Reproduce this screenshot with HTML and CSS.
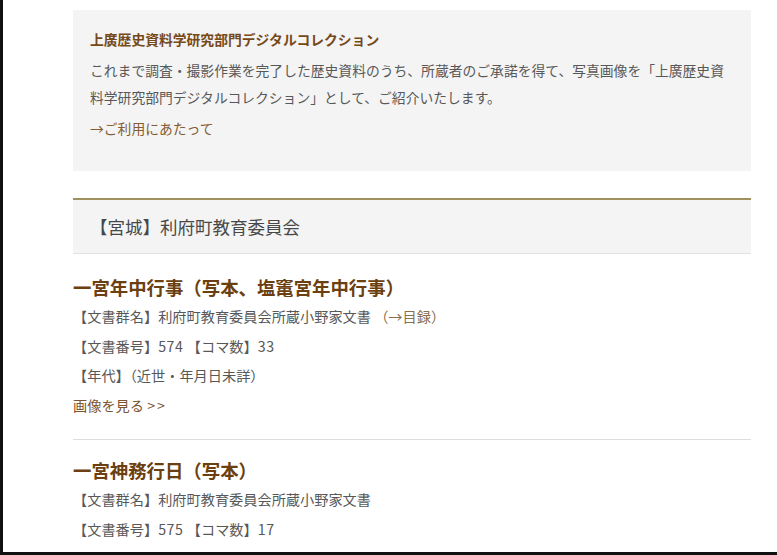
FILE: index.html
```html
<!DOCTYPE html>
<html lang="ja">
<head>
    <meta charset="UTF-8">
    <meta name="viewport" content="width=device-width, initial-scale=1.0">
    <title>上廣歴史資料学研究部門デジタルコレクション</title>
    <link rel="stylesheet" href="styles.css">
</head>
<body>
    <div class="frame"></div>

    <main class="content">
        <section class="intro">
            <h1 class="intro-title">上廣歴史資料学研究部門デジタルコレクション</h1>
            <p class="intro-text">これまで調査・撮影作業を完了した歴史資料のうち、所蔵者のご承諾を得て、写真画像を「上廣歴史資料学研究部門デジタルコレクション」として、ご紹介いたします。</p>
            <a class="intro-link" href="#">→ご利用にあたって</a>
        </section>

        <section class="owner">
            <h2 class="owner-name">【宮城】利府町教育委員会</h2>

            <article class="doc">
                <h3 class="doc-title">一宮年中行事（写本、塩竃宮年中行事）</h3>
                <p class="doc-line">【文書群名】利府町教育委員会所蔵小野家文書 <a class="catalog" href="#">（→目録）</a></p>
                <p class="doc-line">【文書番号】<span class="num">574</span> 【コマ数】<span class="num">33</span></p>
                <p class="doc-line">【年代】（近世・年月日未詳）</p>
                <p class="doc-line"><a class="view-link" href="#">画像を見る <span class="arrows">&gt;&gt;</span></a></p>
            </article>

            <article class="doc">
                <h3 class="doc-title">一宮神務行日（写本）</h3>
                <p class="doc-line">【文書群名】利府町教育委員会所蔵小野家文書</p>
                <p class="doc-line">【文書番号】<span class="num">575</span> 【コマ数】<span class="num">17</span></p>
                <p class="doc-line">【年代】（近世・年月日未詳）</p>
                <p class="doc-line"><a class="view-link" href="#">画像を見る <span class="arrows">&gt;&gt;</span></a></p>
            </article>
        </section>
    </main>
</body>
</html>
```

FILE: styles.css
```css
body {
    margin: 0;
    background-color: #fff;
    color: #555;
    font-family: "Noto Sans CJK JP", "Noto Sans", sans-serif;
    overflow: hidden;
}

a {
    text-decoration: none;
}

/* black capture frame on the left and bottom edges */
.frame {
    position: fixed;
    left: 0;
    top: 0;
    right: 0;
    bottom: 0;
    border-left: 3px solid #111;
    border-bottom: 3px solid #111;
    pointer-events: none;
    z-index: 10;
}

.content {
    width: 678px;
    margin-left: 73px;
    padding-top: 10px;
}

.intro {
    background-color: #f4f4f4;
    padding: 17px 17px 27px;
    height: 117px;
}

.intro-title {
    margin: 0;
    font-size: 13.8px;
    line-height: 24px;
    font-weight: bold;
    color: #76491a;
}

.intro-text {
    margin: 6px 0 0;
    font-size: 13.8px;
    line-height: 27px;
    color: #585858;
}

.intro-link {
    display: block;
    margin-top: 4px;
    font-size: 13.8px;
    line-height: 27px;
    color: #855c32;
}

.owner {
    margin-top: 27px;
    border-top: 2px solid #a09060;
}

.owner-name {
    margin: 0;
    height: 53px;
    padding-left: 17px;
    background-color: #f4f4f4;
    border-bottom: 1px solid #e2e2e2;
    font-size: 17.5px;
    font-weight: normal;
    line-height: 53px;
    color: #484848;
}

.doc {
    padding: 18px 0 19px;
    border-bottom: 1px solid #ddd;
}

.doc + .doc {
    padding-top: 15px;
}

.doc-title {
    margin: 0;
    font-size: 18.4px;
    line-height: 30px;
    font-weight: bold;
    color: #6b3f10;
}

.doc-line {
    margin: 0;
    font-size: 14.2px;
    line-height: 29.5px;
    color: #585858;
}

.num {
    letter-spacing: 0.6px;
}

.arrows {
    letter-spacing: 2px;
}

.catalog {
    color: #8a7050;
}

.view-link {
    color: #7b5530;
}
```
